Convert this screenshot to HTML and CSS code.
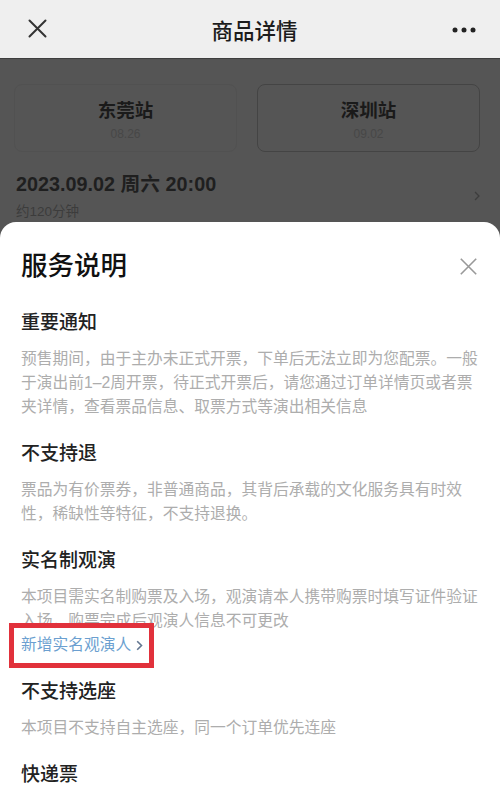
FILE: index.html
```html
<!DOCTYPE html>
<html lang="zh-CN">
  <head>
    <meta charset="UTF-8" />
    <meta name="viewport" content="width=device-width, initial-scale=1.0" />
    <title>商品详情</title>
    <link rel="stylesheet" href="styles.css">
  </head>
  <body>
    <div class="screen">
      <header class="nav">
        <svg class="nav-close" width="19" height="19" viewBox="0 0 19 19">
          <path d="M1.5 1.5L17.5 17.5M17.5 1.5L1.5 17.5" stroke="#333" stroke-width="2" stroke-linecap="round" />
        </svg>
        <div class="nav-title">商品详情</div>
        <svg class="nav-more" width="24" height="6" viewBox="0 0 24 6">
          <circle cx="3" cy="3" r="2.5" fill="#222" />
          <circle cx="12" cy="3" r="2.5" fill="#222" />
          <circle cx="21" cy="3" r="2.5" fill="#222" />
        </svg>
      </header>

      <!-- page behind the sheet, already dimmed -->
      <section class="backdrop">
        <div class="stations">
          <div class="station">
            <div class="station-name">东莞站</div>
            <div class="station-date">08.26</div>
          </div>
          <div class="station station-active">
            <div class="station-name">深圳站</div>
            <div class="station-date">09.02</div>
          </div>
        </div>
        <div class="show-time">
          <div>
            <div class="show-date">2023.09.02 周六 20:00</div>
            <div class="show-length">约120分钟</div>
          </div>
          <svg width="6" height="10" viewBox="0 0 6 10">
            <path d="M1 1L5 5L1 9" fill="none" stroke="#3d3d3d" stroke-width="1.3" />
          </svg>
        </div>
      </section>

      <section class="sheet">
        <div class="sheet-head">
          <h2 class="sheet-title">服务说明</h2>
          <svg class="sheet-close" width="17" height="17" viewBox="0 0 17 17">
            <path d="M0.8 0.8L16.2 16.2M16.2 0.8L0.8 16.2" stroke="#999" stroke-width="1.6" />
          </svg>
        </div>

        <div class="notice">
          <h3 class="notice-title">重要通知</h3>
          <p class="notice-text">预售期间，由于主办未正式开票，下单后无法立即为您配票。一般于演出前1–2周开票，待正式开票后，请您通过订单详情页或者票夹详情，查看票品信息、取票方式等演出相关信息</p>
        </div>

        <div class="notice">
          <h3 class="notice-title">不支持退</h3>
          <p class="notice-text">票品为有价票券，非普通商品，其背后承载的文化服务具有时效性，稀缺性等特征，不支持退换。</p>
        </div>

        <div class="notice">
          <h3 class="notice-title">实名制观演</h3>
          <p class="notice-text">本项目需实名制购票及入场，观演请本人携带购票时填写证件验证入场，购票完成后观演人信息不可更改</p>
          <div class="add-viewer">
            新增实名观演人
            <svg width="7" height="11" viewBox="0 0 7 11">
              <path d="M1.2 1.2L5.5 5.5L1.2 9.8" fill="none" stroke="#627690" stroke-width="1.6" />
            </svg>
          </div>
        </div>

        <div class="notice">
          <h3 class="notice-title">不支持选座</h3>
          <p class="notice-text">本项目不支持自主选座，同一个订单优先连座</p>
        </div>

        <div class="notice">
          <h3 class="notice-title">快递票</h3>
        </div>
      </section>
    </div>
  </body>
</html>
```

FILE: styles.css
```css
body {
  margin: 0;
  background-color: #555555;
  font-family: "Liberation Sans", "Noto Sans CJK SC", sans-serif;
}

.screen {
  width: 500px;
  height: 790px;
  overflow: hidden;
}

.nav {
  height: 58px;
  display: flex;
  align-items: center;
  justify-content: space-between;
  padding: 0 24px 0 28px;
  background-color: #efefef;
  border-bottom: 1px solid #3e3e3e;
}

.nav-close {
  margin-top: -2px;
}

.nav-title {
  font-size: 21.5px;
  font-weight: 500;
  color: #1c1c1c;
  margin-left: 10px;
}

.nav-more {
  margin-top: 2px;
}

.backdrop {
  height: 163px;
  box-sizing: border-box;
  padding: 25px 20px 0 14px;
  background-color: #555555;
}

.stations {
  display: flex;
  gap: 20px;
}

.station {
  flex: 1;
  height: 68px;
  box-sizing: border-box;
  padding-top: 14px;
  border: 1px solid #515151;
  border-radius: 8px;
  text-align: center;
}

.station-active {
  border-color: #444444;
}

.station-name {
  font-size: 18.5px;
  line-height: 24px;
  font-weight: bold;
  color: #1a1a1a;
}

.station-date {
  margin-top: 3px;
  font-size: 12px;
  line-height: 16px;
  color: #474747;
}

.show-time {
  display: flex;
  align-items: center;
  justify-content: space-between;
  margin-top: 19px;
  padding-left: 2px;
}

.show-date {
  font-size: 19.8px;
  line-height: 26px;
  font-weight: bold;
  color: #1f1f1f;
}

.show-length {
  margin-top: 6px;
  font-size: 13.5px;
  line-height: 18px;
  color: #3c3c3c;
}

.sheet {
  padding: 26px 20px 0 21px;
  background-color: #ffffff;
  border-radius: 16px 16px 0 0;
  height: 600px;
}

.sheet-head {
  display: flex;
  align-items: center;
  justify-content: space-between;
}

.sheet-title {
  margin: 0;
  font-size: 26.5px;
  line-height: 36px;
  font-weight: 500;
  color: #111111;
}

.sheet-close {
  margin-right: 3px;
}

.notice {
  margin-top: 22px;
}

.sheet-head + .notice {
  margin-top: 26px;
}

.notice-title {
  margin: 0 0 11px;
  font-size: 19px;
  line-height: 26px;
  font-weight: 500;
  color: #222222;
}

.notice-text {
  margin: 0;
  font-size: 15.75px;
  line-height: 24px;
  color: #adadad;
}

.add-viewer {
  position: relative;
  display: inline-flex;
  align-items: center;
  gap: 5px;
  font-size: 15.75px;
  line-height: 24px;
  color: #6b9fd0;
}

/* red highlight drawn over the link */
.add-viewer::after {
  content: "";
  position: absolute;
  top: -10px;
  bottom: -11px;
  left: -12px;
  right: -11px;
  border: 5px solid #e1313b;
}
```
